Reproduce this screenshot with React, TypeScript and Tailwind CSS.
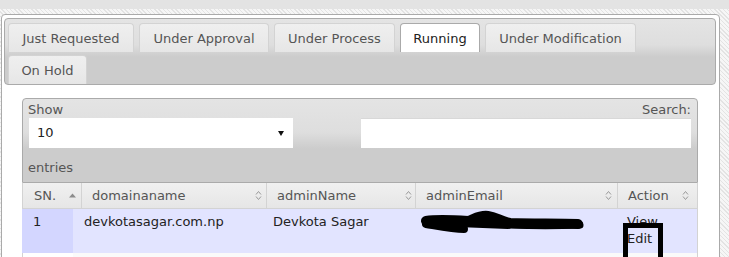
import React from "react";

const font = "font-['DejaVu_Sans',Verdana,sans-serif]";

function SortBoth() {
  return (
    <svg width="7" height="11" viewBox="0 0 7 11" className="shrink-0">
      <path d="M1 4.5 L3.5 1.5 L6 4.5" fill="none" stroke="#9a9a9a" strokeWidth="1" />
      <path d="M1 6.5 L3.5 9.5 L6 6.5" fill="none" stroke="#9a9a9a" strokeWidth="1" />
    </svg>
  );
}

function SortAsc() {
  return (
    <svg width="7" height="5" viewBox="0 0 7 5" className="shrink-0">
      <path d="M0 4.5 L3.5 0.5 L7 4.5 Z" fill="#8c8c8c" />
    </svg>
  );
}

type Tab = { label: string; w: string; active?: boolean };

const row1: Tab[] = [
  { label: "Just Requested", w: "w-[126px]" },
  { label: "Under Approval", w: "w-[130px]" },
  { label: "Under Process", w: "w-[121px]" },
  { label: "Running", w: "w-[80px]", active: true },
  { label: "Under Modification", w: "w-[151px]" },
];

function TabItem({ t }: { t: Tab }) {
  return (
    <div
      className={
        "h-[29px] shrink-0 flex items-center justify-center rounded-t-[4px] border-t border-x leading-[17px] " +
        t.w +
        (t.active
          ? " bg-white border-[#aaaaaa] text-[#212121]"
          : " bg-[linear-gradient(#efefef,#ebebeb_50%,#e6e6e6)] border-[#d3d3d3] text-[#555555]")
      }
    >
      {t.label}
    </div>
  );
}

export default function App() {
  return (
    <div
      className={
        "relative w-[729px] h-[257px] overflow-hidden text-[13px] bg-[repeating-linear-gradient(45deg,#f6f6f6_0px,#f6f6f6_2px,#e3e3e3_2px,#e3e3e3_3px)] " +
        font
      }
    >
      <div className="h-[9px] bg-[#e3e3e3]" />
      <div className="mt-[5px] ml-[1px] w-[719px] h-[300px] border border-[#aaaaaa] rounded-[4px] bg-white pt-[3px] pl-[2px] pr-[3px]">
        {/* tabs nav */}
        <div className="w-[712px] h-[67px] border border-[#aaaaaa] rounded-[4px] bg-[linear-gradient(#e4e4e4,#dedede_40%,#cccccc_58%,#cccccc)] pt-[4px] pl-[3px]">
          <div className="flex gap-x-[5px]">
            {row1.map((t) => (
              <TabItem key={t.label} t={t} />
            ))}
          </div>
          <div className="flex mt-[3px]">
            <TabItem t={{ label: "On Hold", w: "w-[79px]" }} />
          </div>
        </div>

        {/* panel */}
        <div className="pt-[13px] px-[18px]">
          {/* toolbar */}
          <div className="h-[85px] border border-[#aaaaaa] rounded-t-[4px] bg-[linear-gradient(#e4e4e4,#dedede_40%,#cccccc_60%,#cccccc)] pt-[3px] pl-[5px] pr-[6px] text-[#555555]">
            <div className="flex justify-between">
              <div className="flex flex-col">
                <div className="leading-[16px] h-[16px]">Show</div>
                <div className="ml-[1px] w-[264px] h-[30px] bg-white flex items-center justify-between pl-[8px] pr-[9px] text-[#222222]">
                  <span>10</span>
                  <svg width="6" height="5" viewBox="0 0 6 5">
                    <path d="M0 0 L6 0 L3 5 Z" fill="#111" />
                  </svg>
                </div>
              </div>
              <div className="flex flex-col items-end">
                <div className="leading-[16px] h-[16px]">Search:</div>
                <div className="w-[330px] h-[30px] bg-white border-t border-[#d8d8d8]" />
              </div>
            </div>
            <div className="mt-[11px] leading-[17px]">entries</div>
          </div>

          {/* header row */}
          <div className="flex h-[26px] border-l border-b border-[#d3d3d3] bg-[linear-gradient(#f0f0f0,#ebebeb_50%,#e6e6e6)] text-[#555555] leading-[17px]">
            <div className="w-[59px] border-r border-[#d3d3d3] flex items-center justify-between pl-[11px] pr-[5px]">
              <span>SN.</span>
              <SortAsc />
            </div>
            <div className="w-[185px] border-r border-[#d3d3d3] flex items-center justify-between pl-[10px] pr-[4px]">
              <span>domainaname</span>
              <SortBoth />
            </div>
            <div className="w-[149px] border-r border-[#d3d3d3] flex items-center justify-between pl-[10px] pr-[3px]">
              <span>adminName</span>
              <SortBoth />
            </div>
            <div className="w-[202px] border-r border-[#d3d3d3] flex items-center justify-between pl-[10px] pr-[5px]">
              <span>adminEmail</span>
              <SortBoth />
            </div>
            <div className="w-[80px] border-r border-[#d3d3d3] flex items-center justify-between pl-[10px] pr-[8px]">
              <span>Action</span>
              <SortBoth />
            </div>
          </div>

          {/* body row */}
          <div className="flex h-[44px] border-r border-[#d3d3d3] bg-[#e2e4ff] text-[#222222] leading-[17px]">
            <div className="w-[51px] bg-[#d3d6ff] pl-[11px] pt-[4px]">1</div>
            <div className="w-[190px] pl-[11px] pt-[4px]">devkotasagar.com.np</div>
            <div className="w-[149px] pl-[10px] pt-[4px]">Devkota Sagar</div>
            <div className="relative w-[205px] pl-[10px] pt-[4px]">
              <svg
                className="absolute left-[6px] top-[1px]"
                width="170"
                height="28"
                viewBox="0 0 170 28"
              >
                <path
                  d="M8 11 C 20 9, 35 10, 50 11 C 58 8, 62 5, 70 6 C 78 7, 82 11, 92 13 C 115 14, 140 13, 160 14"
                  fill="none"
                  stroke="#000"
                  strokeWidth="10"
                  strokeLinecap="round"
                />
                <path
                  d="M8 14 C 20 16, 35 19, 46 19"
                  fill="none"
                  stroke="#000"
                  strokeWidth="8"
                  strokeLinecap="round"
                />
                <path d="M40 12 L 90 14" fill="none" stroke="#000" strokeWidth="10" strokeLinecap="round" />
                <path
                  d="M92 15 C 115 16, 140 16, 162 15"
                  fill="none"
                  stroke="#000"
                  strokeWidth="7"
                  strokeLinecap="round"
                />
              </svg>
            </div>
            <div className="w-[80px] pl-[10px] pt-[4px]">
              <div>View</div>
              <div>Edit</div>
            </div>
          </div>

          {/* next row */}
          <div className="flex h-[20px] border-r border-l border-[#d3d3d3] bg-[#fafafa]">
            <div className="w-[50px] bg-white" />
          </div>
        </div>
      </div>

      {/* annotation box */}
      <div className="absolute left-[623px] top-[223px] w-[40px] h-[50px] border-[5px] border-black" />
    </div>
  );
}
